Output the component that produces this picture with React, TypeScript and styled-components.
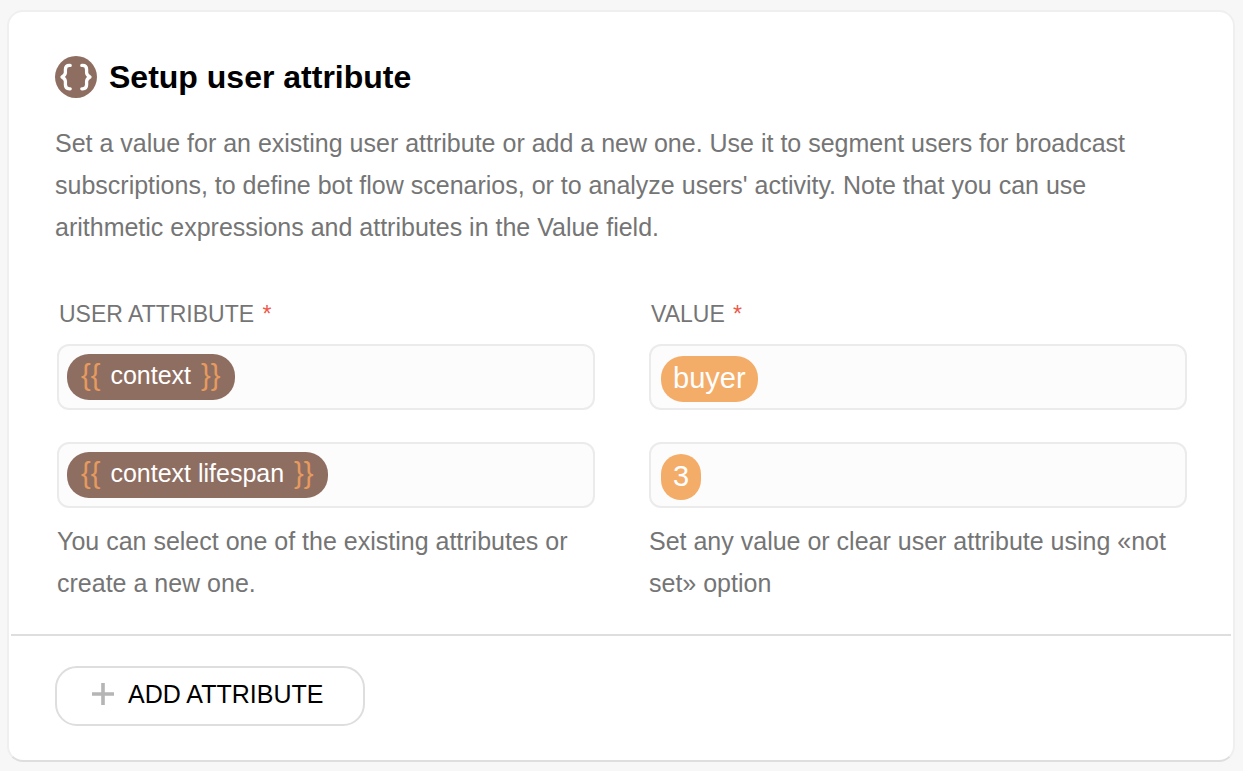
import React from "react";
import styled, { createGlobalStyle } from "styled-components";

const GlobalStyle = createGlobalStyle`
  *, *::before, *::after { box-sizing: border-box; }
  body {
    margin: 0;
    background: #f7f7f7;
    color: #757575;
    font-family: "Liberation Sans", Arial, Helvetica, sans-serif;
    font-size: 25px;
    line-height: 42px;
  }
`;

const Page = styled.main`
  padding: 10px 8px 9px 7px;
`;

const Card = styled.section`
  background: #fff;
  border: 2px solid #efefef;
  border-bottom-color: #dedede;
  border-radius: 16px;
`;

const Body = styled.div`
  padding: 44px 46px 30px;
`;

const Header = styled.header`
  display: flex;
  align-items: center;
  gap: 12px;
`;

const Title = styled.h1`
  margin: 0;
  color: #000;
  font-size: 32px;
  font-weight: 700;
  line-height: 42px;
`;

const Description = styled.p`
  margin: 24px 0 0;
`;

const Columns = styled.div`
  display: grid;
  grid-template-columns: repeat(2, minmax(0, 1fr));
  gap: 54px;
  margin-top: 49px;
  padding-left: 2px;
`;

const Column = styled.div`
  display: flex;
  flex-direction: column;
`;

const Label = styled.label`
  padding-left: 2px;
  margin-bottom: 13px;
  font-size: 23px;
  line-height: 34px;
`;

const Required = styled.span`
  padding-left: 2px;
  color: #ee5a4c;
`;

const Fields = styled.div`
  display: flex;
  flex-direction: column;
  gap: 32px;
`;

type Kind = "attribute" | "value";

const Field = styled.div<{ $kind: Kind }>`
  display: flex;
  align-items: flex-start;
  height: 66px;
  padding: ${(p) => (p.$kind === "attribute" ? "8px" : "10px")};
  background: #fcfcfc;
  border: 2px solid #ebebeb;
  border-radius: 12px;
`;

const Chip = styled.button<{ $kind: Kind }>`
  display: flex;
  flex: none;
  gap: 10px;
  height: 46px;
  padding: ${(p) => (p.$kind === "attribute" ? "0 15px 4px 14px" : "0 12px")};
  border: 0;
  border-radius: 22px;
  background: ${(p) => (p.$kind === "attribute" ? "#8f6e62" : "#f4ad69")};
  color: #fff;
  font-family: inherit;
  font-size: ${(p) => (p.$kind === "attribute" ? "25px" : "29px")};
  line-height: ${(p) => (p.$kind === "attribute" ? "42px" : "44px")};
  cursor: pointer;
`;

const Brace = styled.span`
  color: #e69a5e;
  font-size: 29px;
`;

const Entry = styled.input`
  flex: 1;
  min-width: 0;
  height: 42px;
  padding: 0 8px;
  border: 0;
  outline: 0;
  background: transparent;
  color: #333;
  font: inherit;
`;

const Hint = styled.p`
  margin: 12px 0 0;
`;

const Footer = styled.footer`
  margin: 0 2px;
  padding: 30px 44px 34px;
  border-top: 2px solid #dedede;
`;

const AddButton = styled.button`
  display: flex;
  align-items: center;
  gap: 14px;
  height: 60px;
  padding: 0 40px 4px 35px;
  border: 2px solid #dedede;
  border-radius: 22px;
  background: #fff;
  color: #000;
  font-family: inherit;
  font-size: 25px;
  line-height: 42px;
  cursor: pointer;
`;

const BracesIcon = () => (
  <svg width="42" height="42" viewBox="0 0 42 42" aria-hidden="true">
    <circle cx="21" cy="21" r="21" fill="#8f6e62" />
    <g fill="none" stroke="#fff" strokeWidth="3.3" strokeLinecap="round" strokeLinejoin="round">
      <path d="M15.2 9.4h-.8q-4 0-4 4v3.2q0 2.6-3.4 4.4q3.4 1.8 3.4 4.4v3.4q0 4 4 4h.8" />
      <path d="M26.8 9.4h.8q4 0 4 4v3.2q0 2.6 3.4 4.4q-3.4 1.8-3.4 4.4v3.4q0 4-4 4h-.8" />
    </g>
  </svg>
);

const PlusIcon = () => (
  <svg width="22" height="22" viewBox="0 0 22 22" aria-hidden="true">
    <path d="M11 0v22M0 11h22" stroke="#b5b5b5" strokeWidth="3.6" />
  </svg>
);

interface ColumnData {
  id: string;
  label: string;
  kind: Kind;
  items: string[];
  hint: string;
}

const columns: ColumnData[] = [
  {
    id: "attribute",
    label: "USER ATTRIBUTE",
    kind: "attribute",
    items: ["context", "context lifespan"],
    hint: "You can select one of the existing attributes or create a new one.",
  },
  {
    id: "value",
    label: "VALUE",
    kind: "value",
    items: ["buyer", "3"],
    hint: "Set any value or clear user attribute using «not set» option",
  },
];

export default function App() {
  return (
    <>
      <GlobalStyle />
      <Page>
        <Card>
          <Body>
            <Header>
              <BracesIcon />
              <Title>Setup user attribute</Title>
            </Header>
            <Description>
              Set a value for an existing user attribute or add a new one. Use it to segment users for
              broadcast subscriptions, to define bot flow scenarios, or to analyze users' activity. Note
              that you can use arithmetic expressions and attributes in the Value field.
            </Description>
            <Columns>
              {columns.map((column) => (
                <Column key={column.id}>
                  <Label htmlFor={`${column.id}-0`}>
                    {column.label} <Required>*</Required>
                  </Label>
                  <Fields>
                    {column.items.map((item, i) => (
                      <Field key={item} $kind={column.kind}>
                        <Chip type="button" $kind={column.kind}>
                          {column.kind === "attribute" && <Brace>{"{{"}</Brace>}
                          <span>{item}</span>
                          {column.kind === "attribute" && <Brace>{"}}"}</Brace>}
                        </Chip>
                        <Entry
                          id={`${column.id}-${i}`}
                          type="text"
                          aria-label={i > 0 ? `${column.label} ${i + 1}` : undefined}
                        />
                      </Field>
                    ))}
                  </Fields>
                  <Hint>{column.hint}</Hint>
                </Column>
              ))}
            </Columns>
          </Body>
          <Footer>
            <AddButton type="button">
              <PlusIcon />
              ADD ATTRIBUTE
            </AddButton>
          </Footer>
        </Card>
      </Page>
    </>
  );
}
